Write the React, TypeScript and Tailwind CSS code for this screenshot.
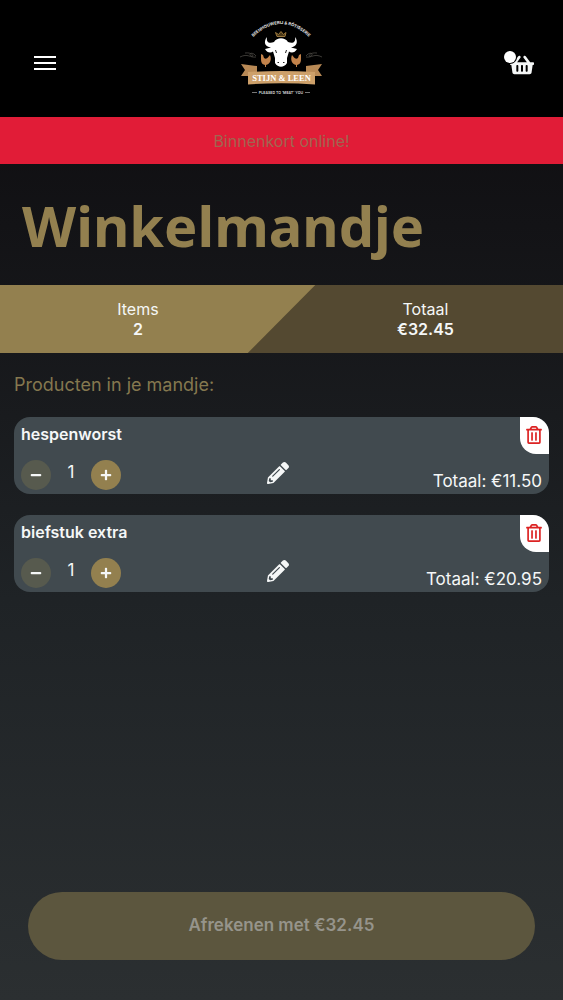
import { useState } from 'react';
import { FaMinus, FaPencilAlt, FaPlus, FaRegTrashAlt, FaShoppingBasket } from 'react-icons/fa';

interface CartItem {
  id: number;
  name: string;
  quantity: number;
  price: number;
}

const initialItems: CartItem[] = [
  { id: 1, name: 'hespenworst', quantity: 1, price: 11.5 },
  { id: 2, name: 'biefstuk extra', quantity: 1, price: 20.95 },
];

const fmt = (n: number) => `€${n.toFixed(2)}`;

function Logo() {
  return (
    <svg viewBox="2 2 100 100" className="w-25 h-25" role="img" aria-label="Stijn & Leen">
      <path id="logo-arc" d="M21 30Q51 0 81 30" fill="none" />
      <text fill="#e8e8e8" fontSize="4.200" fontWeight="700" fontFamily="Inter, sans-serif">
        <textPath href="#logo-arc" startOffset="50%" textAnchor="middle">BEENHOUWERIJ &amp; RÔTISSERIE</textPath>
      </text>

      {/* Crown */}
      <path d="M47 27.500L45.500 23.500L48.500 25.500L51 22.500L53.500 25.500L56 23.500L55 27.500Z" fill="#4a3818" stroke="#9a773c" strokeWidth="1" />

      {/* Bull */}
      <path
        d="M37 28C36 33 39 35 44 33C47 28 55 28 58 33C63 35 66 33 65 28C69 33 66 38 61 38.500L67 40C65 44 61 44 59 42.500L57 49L57 54C54 59 48 59 45 54L45 49L43 42.500C41 44 37 44 35 40L41 38.500C35 38 33 33 37 28Z"
        fill="#fff"
      />
      <path d="M45.500 41L46.500 44M56.500 41L55.500 44M47.500 53.500H49M53 53.500H54.500" stroke="#222" strokeWidth="1" />

      {/* Chickens */}
      <path d="M31 45L33 46L34 49C37 51 38 48 40 46C42 51 40 55 36 56V58H35V56C31 55 31 52 31 49Z" fill="#c3834b" />
      <path d="M71 45L69 46L68 49C65 51 64 48 62 46C60 51 62 55 66 56V58H67V56C71 55 71 52 71 49Z" fill="#c3834b" />
      <g fill="none" stroke="#55514c" strokeWidth="0.700">
        <path d="M26 47C22 42 18 45 21 47S24 43 15 44M26 48C20 49 18 44 10 48" />
        <path d="M76 47C80 42 84 45 81 47S78 43 87 44M76 48C82 49 84 44 92 48" />
      </g>

      {/* Ribbon */}
      <path d="M11 55L27 57V67H11L15 61ZM92 55L76 57V67H92L88 61Z" fill="#b88955" />
      <path d="M18 63Q51 61 85 63V75.500Q51 73 18 75.500Z" fill="#cda06a" />
      <text x="51.500" y="71.500" textAnchor="middle" fill="#fff" fontSize="8.500" fontWeight="700" fontFamily="'Liberation Serif', serif">
        STIJN &amp; LEEN
      </text>

      <path d="M22 83.500H27M75 83.500H80" stroke="#aaa" strokeWidth="0.700" />
      <text x="51" y="85" textAnchor="middle" fill="#ddd" fontSize="3.600" fontWeight="600" fontFamily="Inter, sans-serif">
        PLEASED TO 'MEAT' YOU
      </text>
    </svg>
  );
}

interface CartRowProps {
  item: CartItem;
  onChange: (quantity: number) => void;
  onRemove: () => void;
}

function CartRow({ item, onChange, onRemove }: CartRowProps) {
  return (
    <li className="relative h-[77px] rounded-2xl bg-[#414a4f] px-[7px] pt-[5px] pb-[3px] flex flex-col justify-between overflow-hidden">
      <h3 className="text-base leading-6 font-semibold">{item.name}</h3>
      <div className="grid grid-cols-[1fr_auto_1fr] items-center">
        <div className="flex items-center">
          <button aria-label="Minder" disabled={item.quantity <= 1} onClick={() => onChange(item.quantity - 1)}
            className="flex size-[30px] items-center justify-center rounded-full bg-[#93804f] disabled:bg-[#575a4e]">
            <FaMinus className="size-3" />
          </button>
          <span className="w-10 pb-1 text-center text-[17px]">{item.quantity}</span>
          <button aria-label="Meer" onClick={() => onChange(item.quantity + 1)}
            className="flex size-[30px] items-center justify-center rounded-full bg-[#93804f]">
            <FaPlus className="size-3" />
          </button>
        </div>
        <button aria-label={`${item.name} bewerken`} className="pr-2 pb-1">
          <FaPencilAlt className="size-[22px]" />
        </button>
        <p className="pt-3 text-right text-[17px] leading-5">Totaal: {fmt(item.price * item.quantity)}</p>
      </div>
      <button aria-label={`${item.name} verwijderen`} onClick={onRemove}
        className="absolute top-0 right-0 flex h-[37px] w-[29px] items-center justify-center rounded-bl-2xl bg-white pr-0.5 pb-0.5 text-[#dc2323]">
        <FaRegTrashAlt className="size-[18px]" />
      </button>
    </li>
  );
}

export default function App() {
  const [items, setItems] = useState(initialItems);

  const count = items.reduce((sum, i) => sum + i.quantity, 0);
  const total = items.reduce((sum, i) => sum + i.price * i.quantity, 0);

  const setQuantity = (id: number, quantity: number) =>
    setItems(items.map((i) => (i.id === id ? { ...i, quantity } : i)));
  const remove = (id: number) => setItems(items.filter((i) => i.id !== id));

  return (
    <div className="min-h-screen flex flex-col bg-linear-to-b from-[#0c0a0d] via-[#1f2326] via-60% to-[#2b2f31] font-[Inter,sans-serif] text-[#f5f7f7]">
      <header className="flex h-[117px] items-center justify-between bg-black px-[29px] pb-2">
        <button aria-label="Menu" className="flex w-8 justify-center pt-4">
          <svg viewBox="0 0 24 16" className="h-4 w-6" stroke="#fff" strokeWidth="2">
            <path d="M1 2H23M1 8H23M1 14H23" />
          </svg>
        </button>
        <a href="#" className="pt-3"><Logo /></a>
        <button aria-label="Winkelmandje" className="relative flex w-8 justify-end pt-5">
          <FaShoppingBasket className="size-6" />
          <span className="absolute top-[18px] left-0.5 size-3 rounded-full bg-white ring-1 ring-black" />
        </button>
      </header>

      <p className="bg-[#e11c37] pt-[13px] pb-[11px] text-center text-base leading-[23px] text-[#a06650]">Binnenkort online!</p>

      <h1 className="px-[22px] pt-[21px] pb-5 font-['Noto_Sans',sans-serif] text-[56px] leading-20 font-bold text-[#93804f]">Winkelmandje</h1>

      {/* Summary */}
      <section className="relative flex h-[68px] bg-[#544931]">
        <div className="absolute inset-0 bg-[#93804f] [clip-path:polygon(0_0,56%_0,44%_100%,0_100%)]" />
        <div className="relative flex w-[49%] flex-col justify-center text-center text-base leading-5">
          <span>Items</span>
          <strong className="font-semibold">{count}</strong>
        </div>
        <div className="relative flex flex-1 flex-col justify-center pl-3 text-center text-base leading-5">
          <span>Totaal</span>
          <strong className="font-semibold">{fmt(total)}</strong>
        </div>
      </section>

      <main className="flex-1 px-3.5 pt-[18px]">
        <h2 className="text-lg leading-7 text-[#85784f]">Producten in je mandje:</h2>
        <ul className="mt-[18px] flex flex-col gap-[21px]">
          {items.map((item) => (
            <CartRow key={item.id} item={item} onChange={(q) => setQuantity(item.id, q)} onRemove={() => remove(item.id)} />
          ))}
        </ul>
      </main>

      <footer className="px-7 pt-6 pb-10">
        <button disabled className="h-[68px] w-full rounded-full bg-[#5c563e] text-[17px] font-semibold text-[#96948b]">
          Afrekenen met {fmt(total)}
        </button>
      </footer>
    </div>
  );
}
